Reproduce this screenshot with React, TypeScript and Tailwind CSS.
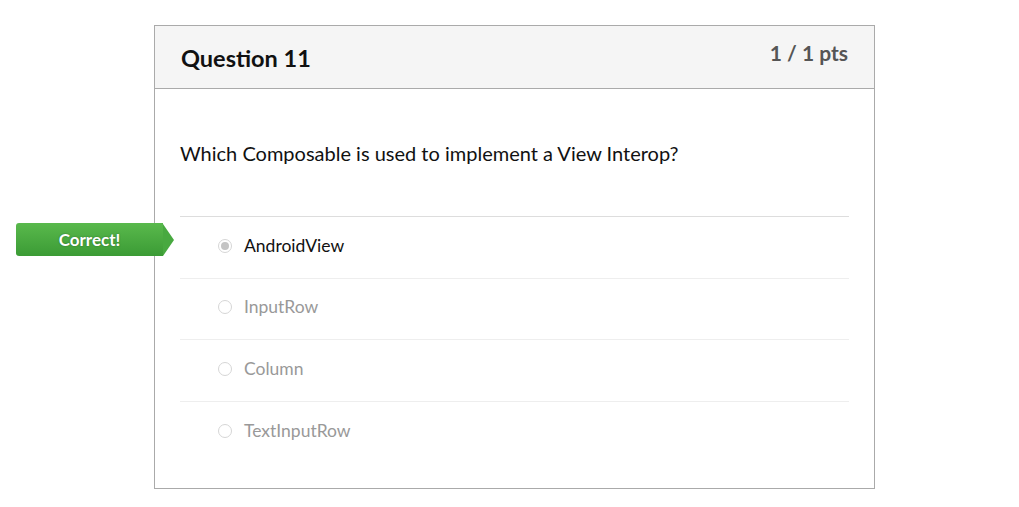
import React from "react";

const answers = [
  { label: "AndroidView", selected: true },
  { label: "InputRow", selected: false },
  { label: "Column", selected: false },
  { label: "TextInputRow", selected: false },
];

const Radio = ({ selected }: { selected: boolean }) => (
  <span className="flex h-[14px] w-[14px] shrink-0 items-center justify-center rounded-full border border-[#d6d6d6] bg-white">
    {selected && <span className="h-[8px] w-[8px] rounded-full bg-[#c4c4c4]" />}
  </span>
);

const CorrectBadge = () => (
  <div className="absolute left-[-164px] top-[6px] flex h-[33px] items-center">
    <div className="flex h-full w-[147px] items-center justify-center rounded-l-[3px] bg-gradient-to-b from-[#59b94c] to-[#3b9b35] text-[17px] font-bold text-white [text-shadow:0_0_2px_rgba(0,0,0,0.35)]">
      Correct!
    </div>
    <div className="h-0 w-0 border-y-[16.5px] border-l-[11px] border-y-transparent border-l-[#48a940]" />
  </div>
);

export default function App() {
  return (
    <div className="min-h-screen bg-white pt-[25px] font-['Lato','Liberation_Sans',sans-serif]">
      <div className="ml-[154px] w-[721px] border border-[#aaaaaa] bg-white">
        <div className="flex items-start justify-between border-b border-[#aaaaaa] bg-[#f5f5f5] px-[26px] pb-[15px] pt-[17px]">
          <h2 className="text-[23.5px] font-bold leading-[30px] text-[#111]">Question 11</h2>
          <span className="text-[21px] font-bold leading-[20px] text-[#555]">1 / 1 pts</span>
        </div>
        <div className="px-[25px] pb-[25px] pt-[51px]">
          <p className="text-[20px] leading-[26px] text-[#111]">
            Which Composable is used to implement a View Interop?
          </p>
          <div className="mt-[50px] border-t border-[#dddddd]">
            {answers.map((a, i) => (
              <div
                key={a.label}
                className={`relative flex h-[61.6px] items-center gap-[12px] pb-[3px] pl-[38px] ${
                  i < answers.length - 1 ? "border-b border-[#eeeeee]" : ""
                }`}
              >
                {a.selected && <CorrectBadge />}
                <Radio selected={a.selected} />
                <span
                  className={`text-[17.5px] ${a.selected ? "text-[#111]" : "text-[#999]"}`}
                >
                  {a.label}
                </span>
              </div>
            ))}
          </div>
        </div>
      </div>
    </div>
  );
}
